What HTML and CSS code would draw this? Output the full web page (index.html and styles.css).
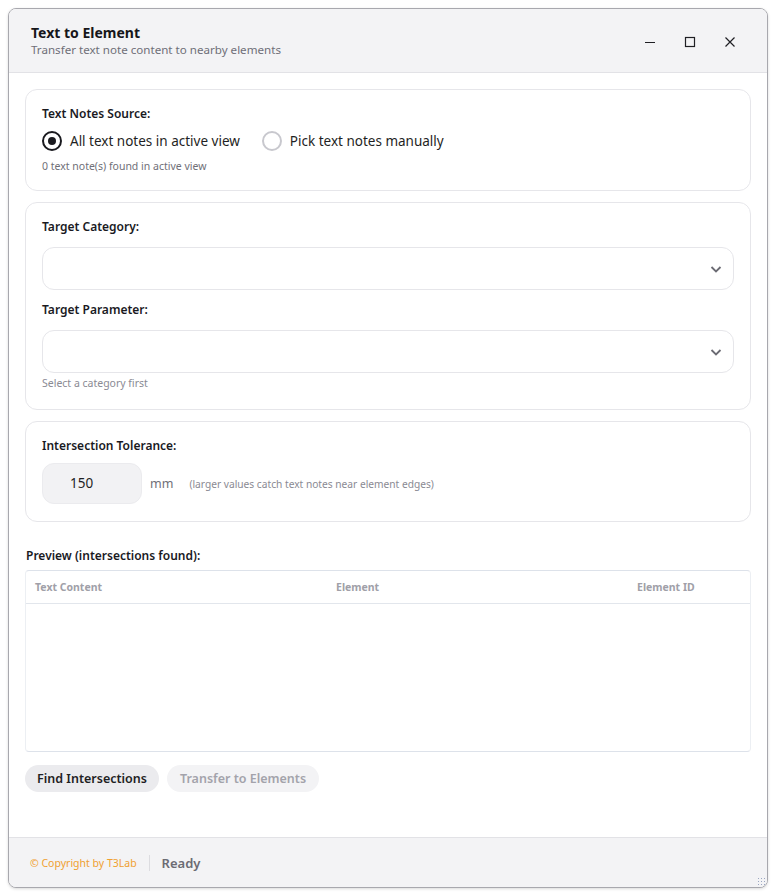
FILE: index.html
```html
<!DOCTYPE html>
<html lang="en">
<head>
    <meta charset="UTF-8">
    <title>Text to Element</title>
    <link rel="stylesheet" href="styles.css">
</head>
<body>
    <div class="window">
        <div class="titlebar">
            <div class="title-text">
                <h1>Text to Element</h1>
                <p>Transfer text note content to nearby elements</p>
            </div>
            <div class="win-controls">
                <span class="ctl">
                    <svg width="12" height="12" viewBox="0 0 12 12"><path d="M1 6.5h10" stroke="#1f1f24" stroke-width="1.2"/></svg>
                </span>
                <span class="ctl">
                    <svg width="12" height="12" viewBox="0 0 12 12"><rect x="1.5" y="1.5" width="9" height="9" fill="none" stroke="#1f1f24" stroke-width="1.2"/></svg>
                </span>
                <span class="ctl">
                    <svg width="12" height="12" viewBox="0 0 12 12"><path d="M1.5 1.5l9 9M10.5 1.5l-9 9" stroke="#1f1f24" stroke-width="1.2"/></svg>
                </span>
            </div>
        </div>

        <div class="content">
            <!-- source -->
            <div class="card">
                <div class="label">Text Notes Source:</div>
                <div class="radios">
                    <label class="radio"><span class="dot checked"></span>All text notes in active view</label>
                    <label class="radio"><span class="dot"></span>Pick text notes manually</label>
                </div>
                <div class="hint dark">0 text note(s) found in active view</div>
            </div>

            <!-- category / parameter -->
            <div class="card tall">
                <div class="label">Target Category:</div>
                <div class="select">
                    <svg width="14" height="14" viewBox="0 0 14 14"><path d="M2.5 5l4.5 4.5L11.5 5" fill="none" stroke="#6b6b73" stroke-width="1.8"/></svg>
                </div>
                <div class="label second">Target Parameter:</div>
                <div class="select">
                    <svg width="14" height="14" viewBox="0 0 14 14"><path d="M2.5 5l4.5 4.5L11.5 5" fill="none" stroke="#6b6b73" stroke-width="1.8"/></svg>
                </div>
                <div class="hint">Select a category first</div>
            </div>

            <!-- tolerance -->
            <div class="card">
                <div class="label">Intersection Tolerance:</div>
                <div class="tol-row">
                    <div class="num-input">150</div>
                    <span class="unit">mm</span>
                    <span class="hint inline">(larger values catch text notes near element edges)</span>
                </div>
            </div>

            <div class="label preview-label">Preview (intersections found):</div>
            <div class="table-wrap">
                <table>
                    <thead>
                        <tr>
                            <th>Text Content</th>
                            <th>Element</th>
                            <th>Element ID</th>
                        </tr>
                    </thead>
                    <tbody></tbody>
                </table>
            </div>

            <div class="buttons">
                <button class="btn">Find Intersections</button>
                <button class="btn disabled">Transfer to Elements</button>
            </div>
        </div>

        <div class="footer">
            <span class="copyright">© Copyright by T3Lab</span>
            <span class="sep"></span>
            <span class="status">Ready</span>
            <span class="grip"></span>
        </div>
    </div>
</body>
</html>
```

FILE: styles.css
```css
/* base */
body {
    margin: 0;
    background: #fff;
    font-family: "Noto Sans", "Open Sans", sans-serif;
    color: #1f1f24;
}

.window {
    margin: 8px;
    width: 758px;
    height: 878px;
    border: 1px solid #a8a8ae;
    border-radius: 8px;
    background: #fff;
    display: flex;
    flex-direction: column;
    overflow: hidden;
    box-shadow: 0 1px 3px rgba(0, 0, 0, 0.15);
}

/* title bar */
.titlebar {
    height: 63px;
    background: #f3f3f5;
    border-bottom: 1px solid #e2e2e6;
    display: flex;
    align-items: center;
    justify-content: space-between;
    padding: 0 0 0 22px;
    flex-shrink: 0;
}

.title-text h1 {
    margin: 0;
    font-size: 14px;
    font-weight: 700;
    line-height: 18px;
    color: #16161a;
}

.title-text p {
    margin: 0;
    font-size: 11.6px;
    line-height: 16px;
    color: #6f6f78;
}

.win-controls {
    display: flex;
    padding-top: 2px;
    margin-right: 17px;
}

.ctl {
    width: 40px;
    height: 30px;
    display: flex;
    align-items: center;
    justify-content: center;
}

/* content */
.content {
    flex: 1;
    padding: 16px 16px 0 16px;
    display: flex;
    flex-direction: column;
}

.card {
    border: 1px solid #e6e6ea;
    border-radius: 12px;
    padding: 15px 16px 17px 16px;
    margin-bottom: 11px;
}

.card.tall {
    padding-bottom: 19px;
}

.label {
    font-size: 12px;
    font-weight: 600;
    line-height: 18px;
    color: #1a1a1f;
}

.label.second {
    margin-top: 11px;
}

.radios {
    display: flex;
    gap: 22px;
    margin-top: 8px;
}

.radio {
    display: flex;
    align-items: center;
    gap: 8px;
    font-size: 13.5px;
    line-height: 20px;
    color: #1f1f24;
}

.dot {
    width: 16px;
    height: 16px;
    border: 2px solid #c8c8ce;
    border-radius: 50%;
    box-sizing: content-box;
    position: relative;
}

.dot.checked {
    border-color: #1a1a1f;
}

.dot.checked::after {
    content: "";
    position: absolute;
    left: 4px;
    top: 4px;
    width: 8px;
    height: 8px;
    border-radius: 50%;
    background: #1a1a1f;
}

.hint {
    font-size: 10.5px;
    line-height: 14px;
    color: #8a8a93;
    margin-top: 3px;
}

.hint.dark {
    color: #6f6f78;
    margin-top: 8px;
}

.select {
    height: 41px;
    border: 1px solid #e6e6ea;
    border-radius: 12px;
    margin-top: 11px;
    display: flex;
    align-items: center;
    justify-content: flex-end;
    padding-right: 10px;
}

.tol-row {
    display: flex;
    align-items: center;
    margin-top: 8px;
}

.num-input {
    width: 100px;
    height: 41px;
    box-sizing: border-box;
    background: #f2f2f4;
    border: 1px solid #ebebee;
    border-radius: 12px;
    font-size: 13.5px;
    line-height: 39px;
    padding-left: 27px;
    color: #1f1f24;
}

.unit {
    font-size: 12.5px;
    color: #6f6f78;
    margin-left: 8px;
}

.hint.inline {
    font-size: 10.2px;
    margin: 0 0 0 16px;
}

/* preview table */
.preview-label {
    margin-top: 14px;
    padding-left: 1px;
}

.table-wrap {
    margin-top: 5px;
    height: 180px;
    border-top: 1px solid #dde2ea;
    border-bottom: 1px solid #dde2ea;
    border-left: 1px solid #eceff3;
    border-right: 1px solid #eceff3;
    border-radius: 4px;
}

table {
    width: 100%;
    border-collapse: collapse;
}

th {
    text-align: left;
    font-size: 10.5px;
    font-weight: 700;
    color: #a0a0a8;
    height: 32px;
    padding: 0 0 0 9px;
    border-bottom: 1px solid #e2e6ec;
}

th:nth-child(1) { width: 292px; }
th:nth-child(2) { width: 292px; }

/* buttons */
.buttons {
    display: flex;
    gap: 8px;
    margin-top: 13px;
}

.btn {
    font-family: inherit;
    font-size: 12.5px;
    font-weight: 600;
    height: 27px;
    padding: 0 12px;
    border: none;
    border-radius: 14px;
    background: #ebebee;
    color: #1f1f24;
}

.btn.disabled {
    background: #f3f3f5;
    color: #a3a3ab;
    padding: 0 13px;
}

/* footer */
.footer {
    height: 49px;
    background: #f3f3f5;
    border-top: 1px solid #e2e2e6;
    display: flex;
    align-items: center;
    padding-left: 21px;
    flex-shrink: 0;
    position: relative;
}

.copyright {
    font-size: 10.5px;
    color: #f0a030;
}

.sep {
    width: 1px;
    height: 16px;
    background: #dcdce0;
    margin: 0 12px;
}

.status {
    font-size: 13px;
    font-weight: 600;
    color: #6b6b73;
}

.grip {
    position: absolute;
    right: 2px;
    bottom: 2px;
    width: 8px;
    height: 8px;
    background-image: radial-gradient(#9aa6c0 0.8px, transparent 0.9px);
    background-size: 3px 3px;
}
```
